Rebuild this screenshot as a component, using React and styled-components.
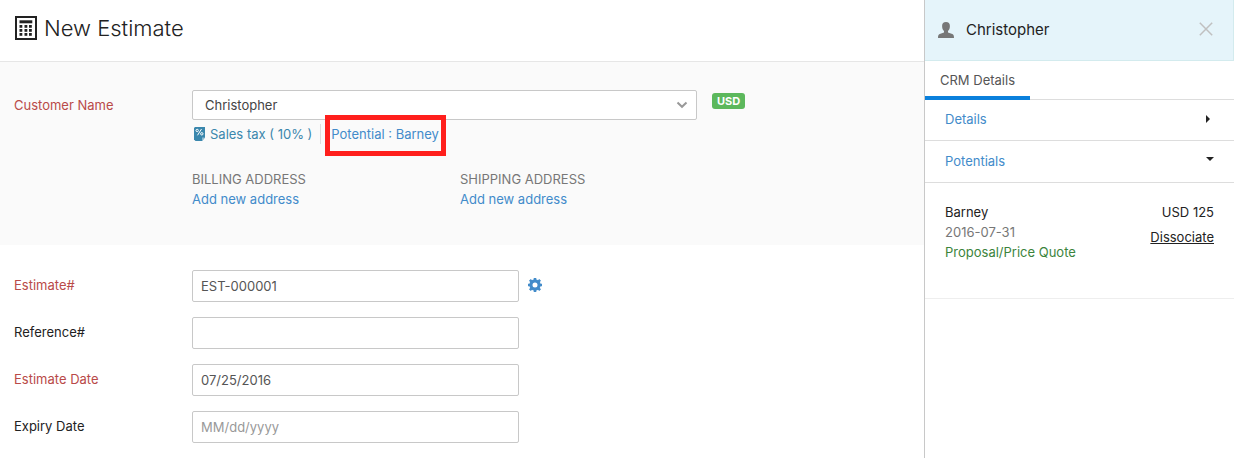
import React, { useState } from "react";
import styled, { createGlobalStyle } from "styled-components";

const GlobalStyle = createGlobalStyle`
  * {
    box-sizing: border-box;
  }

  body {
    margin: 0;
    background: #fff;
    color: #222;
    font-family: Inter, "Liberation Sans", sans-serif;
    font-size: 13px;
    line-height: 20px;
  }

  button,
  input,
  select {
    font: inherit;
  }
`;

const Page = styled.div`
  display: flex;
  min-height: 100vh;
`;

const Main = styled.main`
  flex: 1;
  min-width: 0;
`;

const PageHeader = styled.header`
  display: flex;
  align-items: center;
  gap: 7px;
  height: 62px;
  padding: 0 15px 5px;
  border-bottom: 1px solid #e6e6e6;
`;

const PageTitle = styled.h1`
  margin: 0;
  font-size: 22px;
  font-weight: 300;
  line-height: 32px;
`;

const CustomerSection = styled.section`
  padding: 28px 14px 36px;
  background: #fafafa;
`;

const FormSection = styled.section`
  display: flex;
  flex-direction: column;
  gap: 15px;
  padding: 25px 14px 15px;
`;

const Row = styled.div`
  display: grid;
  grid-template-columns: 178px 1fr;
`;

const Label = styled.label`
  line-height: 30px;
  color: ${({ $required }) => ($required ? "#b94a48" : "#222")};
`;

const Inline = styled.div`
  display: flex;
  align-items: center;
  gap: ${({ $gap }) => $gap}px;
`;

const SelectWrap = styled.div`
  display: grid;
  flex: 0 1 505px;
  align-items: center;

  > * {
    grid-area: 1 / 1;
  }

  svg {
    justify-self: end;
    margin-right: 9px;
    pointer-events: none;
  }
`;

const Select = styled.select`
  width: 100%;
  height: 30px;
  padding: 0 30px 0 12px;
  border: 1px solid #c8c8c8;
  border-radius: 2px;
  background: #fff;
  color: #444;
  appearance: none;
`;

const Currency = styled.span`
  align-self: flex-start;
  margin-top: 3px;
  padding: 0 5px;
  border-radius: 3px;
  background: #5cb85c;
  color: #fff;
  font-size: 11px;
  font-weight: 700;
  line-height: 16px;
`;

const CustomerLinks = styled.div`
  display: flex;
  align-items: center;
  margin-top: 4px;
`;

const Link = styled.a`
  color: #428bca;
  text-decoration: none;
`;

const TaxLink = styled(Link)`
  display: flex;
  align-items: center;
  gap: 5px;
  padding: 0 8px 0 2px;
  border-right: 1px solid #ddd;
  color: #3a87ad;
`;

const PotentialLink = styled(Link)`
  position: relative;
  margin-left: 10px;

  &::after {
    content: "";
    position: absolute;
    inset: -9px -7px -12px -6px;
    border: 5px solid #ff1f1c;
    pointer-events: none;
  }
`;

const Addresses = styled.div`
  display: flex;
  margin-top: 25px;
`;

const Address = styled.div`
  display: flex;
  flex-direction: column;
  align-items: flex-start;
  flex: 0 1 268px;
`;

const AddressTitle = styled.span`
  color: #777;
`;

const Input = styled.input`
  flex: 0 1 327px;
  min-width: 0;
  height: 32px;
  padding: 0 8px;
  border: 1px solid #c8c8c8;
  border-radius: 2px;
  background: #fff;
  color: #555;

  &::placeholder {
    color: #999;
    opacity: 1;
  }
`;

const IconButton = styled.button`
  display: flex;
  padding: 0 0 3px;
  border: 0;
  background: none;
  cursor: pointer;
`;

const Sidebar = styled.aside`
  flex: 0 0 310px;
  border-left: 1px solid #c8c8c8;
`;

const SidebarHeader = styled.header`
  display: flex;
  align-items: center;
  height: 61px;
  padding: 0 20px 0 13px;
  border: 1px solid #d3ebee;
  border-width: 0 1px 1px 0;
  background: #e5f4fa;
`;

const SidebarTitle = styled.h2`
  flex: 1;
  margin: 0 0 0 12px;
  font-size: 15px;
  font-weight: 400;
`;

const Tabs = styled.div`
  display: flex;
  height: 39px;
  border-bottom: 1px solid #ddd;
`;

const Tab = styled.button`
  height: 39px;
  padding: 2px 15px 0;
  border: 0;
  border-bottom: 4px solid #0a80dc;
  background: none;
  color: #555;
`;

const PanelToggle = styled.button`
  display: flex;
  align-items: center;
  justify-content: space-between;
  width: 100%;
  height: ${({ $height }) => $height}px;
  padding: 0 20px 2px;
  border: 0;
  border-bottom: 1px solid #ddd;
  background: none;
  color: #428bca;
  cursor: pointer;
`;

const Caret = styled.svg`
  margin-right: ${({ $open }) => ($open ? 0 : 4)}px;
  margin-bottom: ${({ $open }) => ($open ? 4 : 0)}px;
`;

const Potential = styled.article`
  display: flex;
  justify-content: space-between;
  padding: 19px 20px 36px;
  border-bottom: 1px solid #eee;
`;

const PotentialColumn = styled.div`
  display: flex;
  flex-direction: column;
  align-items: ${({ $end }) => ($end ? "flex-end" : "flex-start")};
  gap: ${({ $end }) => ($end ? 5 : 0)}px;
`;

const Detail = styled.span`
  color: ${({ $color }) => $color || "#222"};
`;

const Dissociate = styled.a`
  color: #222;
  text-decoration: underline;
`;

function CalculatorIcon() {
  const rows = [9, 13, 17];
  const columns = [4.500, 9.500, 14];

  return (
    <svg width="22" height="24" viewBox="0 0 22 24" fill="#222">
      <path fillRule="evenodd" d="M0 0h22v24H0zM2 2v20h18V2z" />
      <path d="M4.500 4.300h12.800v3H4.500z" />
      {rows.map((y) =>
        columns.map((x) => (
          <rect key={`${x}-${y}`} x={x} y={y} width="2.800" height="2.800" />
        ))
      )}
    </svg>
  );
}

function TaxIcon() {
  return (
    <svg width="11" height="14" viewBox="0 0 11 14">
      <path d="M1 0h10v10.500L8 14H1.500L0 12.500V1z" fill="#3a87ad" />
      <path d="M11 10.500H8V14z" fill="#8fbdd3" />
      <g fill="none" stroke="#fff">
        <circle cx="3.200" cy="3.500" r="1.200" />
        <circle cx="7.800" cy="6.800" r="1.200" />
        <path d="M7.500 2L3.500 8.300" />
      </g>
    </svg>
  );
}

function ChevronIcon() {
  return (
    <svg width="12" height="8" viewBox="0 0 12 8">
      <path d="M1.500 1.500L6 5.800l4.500-4.300" fill="none" stroke="#999" strokeWidth="2" />
    </svg>
  );
}

function GearIcon() {
  return (
    <svg width="14" height="14" viewBox="0 0 14 14" fill="none" stroke="#428bca">
      <circle cx="7" cy="7" r="4.100" strokeWidth="3.200" />
      <path
        d="M7 0v2.500M7 11.500V14M0 7h2.500M11.500 7H14M1.900 1.900l1.900 1.900M10.200 10.200l1.900 1.900M1.900 12.100l1.900-1.900M10.200 3.800l1.900-1.900"
        strokeWidth="2.600"
      />
    </svg>
  );
}

function PersonIcon() {
  return (
    <svg width="16" height="16" viewBox="0 0 16 16" fill="#777">
      <path d="M8 0c2.600 0 3.900 1.500 3.900 4 0 2.300-.6 3.900-1.900 5v1.500l4.300 1.600c1.200.5 1.700 1.300 1.700 3.900H0c0-2.600.5-3.400 1.700-3.900L6 10.500V9C4.700 7.900 4.100 6.300 4.100 4 4.100 1.500 5.400 0 8 0z" />
    </svg>
  );
}

function CloseIcon() {
  return (
    <svg width="14" height="14" viewBox="0 0 14 14">
      <path d="M.8.8l12.400 12.400M13.200.8L.8 13.200" stroke="#c0c0c0" strokeWidth="1.500" />
    </svg>
  );
}

function Panel({ title, height, defaultOpen = false, children }) {
  const [open, setOpen] = useState(defaultOpen);

  return (
    <section>
      <PanelToggle
        type="button"
        $height={height}
        aria-expanded={open}
        onClick={() => setOpen(!open)}
      >
        {title}
        <Caret $open={open} width={open ? 8 : 4} height={open ? 4 : 8} fill="#222">
          <path d={open ? "M0 0h8L4 4z" : "M0 0l4 4-4 4z"} />
        </Caret>
      </PanelToggle>
      {open && children}
    </section>
  );
}

function Field({ id, label, required, children, ...inputProps }) {
  return (
    <Row>
      <Label htmlFor={id} $required={required}>
        {label}
      </Label>
      <Inline $gap={9}>
        <Input id={id} type="text" {...inputProps} />
        {children}
      </Inline>
    </Row>
  );
}

function App() {
  return (
    <>
      <GlobalStyle />
      <Page>
        <Main>
          <PageHeader>
            <CalculatorIcon />
            <PageTitle>New Estimate</PageTitle>
          </PageHeader>

          <CustomerSection>
            <Row>
              <Label htmlFor="customer" $required>
                Customer Name
              </Label>
              <div>
                <Inline $gap={15}>
                  <SelectWrap>
                    <Select id="customer" defaultValue="Christopher">
                      <option>Christopher</option>
                    </Select>
                    <ChevronIcon />
                  </SelectWrap>
                  <Currency>USD</Currency>
                </Inline>
                <CustomerLinks>
                  <TaxLink href="#tax">
                    <TaxIcon />
                    Sales tax ( 10% )
                  </TaxLink>
                  <PotentialLink href="#potential">Potential : Barney</PotentialLink>
                </CustomerLinks>
                <Addresses>
                  <Address>
                    <AddressTitle>BILLING ADDRESS</AddressTitle>
                    <Link href="#billing">Add new address</Link>
                  </Address>
                  <Address>
                    <AddressTitle>SHIPPING ADDRESS</AddressTitle>
                    <Link href="#shipping">Add new address</Link>
                  </Address>
                </Addresses>
              </div>
            </Row>
          </CustomerSection>

          <FormSection>
            <Field id="estimate" label="Estimate#" required defaultValue="EST-000001">
              <IconButton type="button" aria-label="Settings">
                <GearIcon />
              </IconButton>
            </Field>
            <Field id="reference" label="Reference#" />
            <Field id="date" label="Estimate Date" required defaultValue="07/25/2016" />
            <Field id="expiry" label="Expiry Date" placeholder="MM/dd/yyyy" />
          </FormSection>
        </Main>

        <Sidebar>
          <SidebarHeader>
            <PersonIcon />
            <SidebarTitle>Christopher</SidebarTitle>
            <IconButton type="button" aria-label="Close">
              <CloseIcon />
            </IconButton>
          </SidebarHeader>
          <Tabs>
            <Tab type="button">CRM Details</Tab>
          </Tabs>
          <Panel title="Details" height={41} />
          <Panel title="Potentials" height={42} defaultOpen>
            <Potential>
              <PotentialColumn>
                <Detail>Barney</Detail>
                <Detail $color="#777">2016-07-31</Detail>
                <Detail $color="#3c843c">Proposal/Price Quote</Detail>
              </PotentialColumn>
              <PotentialColumn $end>
                <Detail>USD 125</Detail>
                <Dissociate href="#dissociate">Dissociate</Dissociate>
              </PotentialColumn>
            </Potential>
          </Panel>
        </Sidebar>
      </Page>
    </>
  );
}

export default App;
